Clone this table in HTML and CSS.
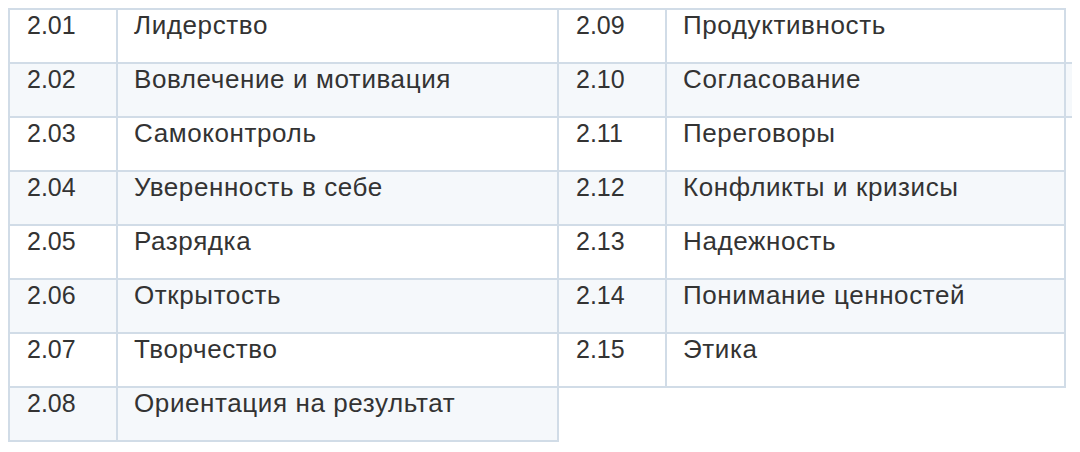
FILE: index.html
```html
<!DOCTYPE html>
<html lang="ru">
<head>
<meta charset="utf-8">
<link rel="stylesheet" href="styles.css">
</head>
<body>
<div class="wrap">
  <table class="grid">
    <tr><td class="num">2.01</td><td class="name">Лидерство</td></tr>
    <tr><td class="num">2.02</td><td class="name">Вовлечение и мотивация</td></tr>
    <tr><td class="num">2.03</td><td class="name">Самоконтроль</td></tr>
    <tr><td class="num">2.04</td><td class="name">Уверенность в себе</td></tr>
    <tr><td class="num">2.05</td><td class="name">Разрядка</td></tr>
    <tr><td class="num">2.06</td><td class="name">Открытость</td></tr>
    <tr><td class="num">2.07</td><td class="name">Творчество</td></tr>
    <tr><td class="num">2.08</td><td class="name">Ориентация на результат</td></tr>
  </table>
  <table class="grid right">
    <tr><td class="num">2.09</td><td class="name">Продуктивность</td></tr>
    <tr><td class="num">2.10</td><td class="name">Согласование</td></tr>
    <tr><td class="num">2.11</td><td class="name">Переговоры</td></tr>
    <tr><td class="num">2.12</td><td class="name">Конфликты и кризисы</td></tr>
    <tr><td class="num">2.13</td><td class="name">Надежность</td></tr>
    <tr><td class="num">2.14</td><td class="name">Понимание ценностей</td></tr>
    <tr><td class="num">2.15</td><td class="name">Этика</td></tr>
  </table>
  <div class="overflow-row"></div>
</div>
</body>
</html>
```
FILE: styles.css
```css
html, body {
  margin: 0;
  padding: 0;
  background: #ffffff;
}
body {
  margin: 8px;
  font-family: "Liberation Sans", Arial, sans-serif;
  color: #333333;
}
.wrap {
  display: flex;
  align-items: flex-start;
  position: relative;
}
.grid {
  border-collapse: collapse;
  line-height: 28px;
}
.grid td {
  border: 2px solid #d1dce7;
  height: 54px;
  padding: 1px 16px 0 16px;
  vertical-align: top;
  box-sizing: border-box;
}
.grid tr:nth-child(even) td {
  background: #f5f8fb;
}
.grid .num {
  width: 108px;
  padding-left: 17px;
  font-size: 25px;
}
.grid .name {
  font-size: 26px;
  letter-spacing: 0.6px;
}
.grid:first-child .name {
  width: 441px;
}
.grid.right {
  margin-left: -2px;
}
.grid.right .name {
  width: 399px;
}
.overflow-row {
  position: absolute;
  left: 1058px;
  top: 54px;
  width: 14px;
  height: 56px;
  box-sizing: border-box;
  border-top: 2px solid #d1dce7;
  border-bottom: 2px solid #d1dce7;
  background: #f5f8fb;
}
```
